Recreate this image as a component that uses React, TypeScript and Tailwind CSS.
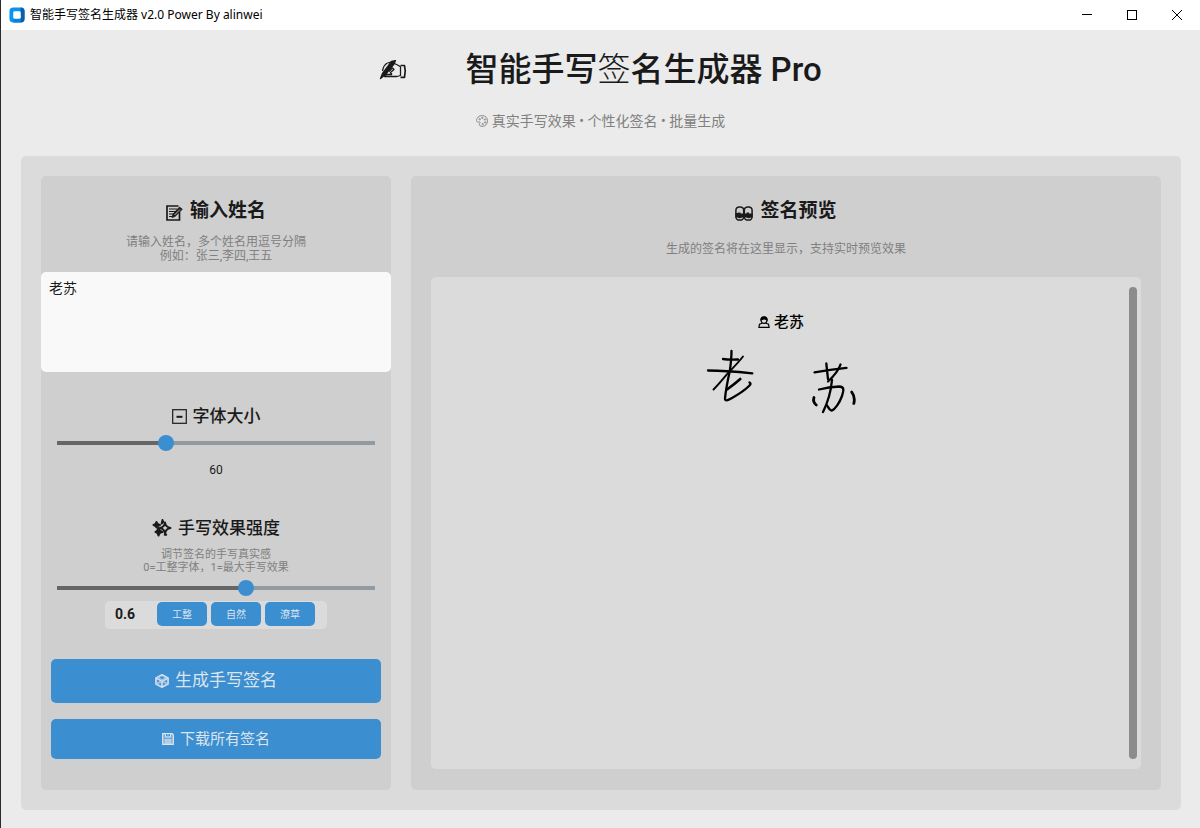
import { useState } from 'react'
import type { InputHTMLAttributes, ReactNode } from 'react'

const PRESETS = [
  { label: '工整', value: 0.2 },
  { label: '自然', value: 0.6 },
  { label: '潦草', value: 0.9 },
]

function WritingHandIcon() {
  return (
    <svg className="w-7 h-5 shrink-0" viewBox="0 0 28 20" fill="none" stroke="currentColor" strokeWidth="1.3" strokeLinejoin="round" aria-hidden="true">
      <path d="M1.500 18.500 3.500 13.500 12.500 1.500 16.500.6 15 4 6.500 14.500Z" fill="currentColor" />
      <path d="M8.500 3C5.500 4.500 4 7.500 3.500 11" />
      <path d="M12 2 8.500 3" />
      <path d="M15.500 3.500 19.500 5.500 21.500 6.800V15.500L18 16.500H5.500L7.500 14.500H13" />
      <path d="M10 11.500 13.500 8 15 9.500 11.500 12.500 13 14.500" />
      <path d="M21.500 5.500H25.500Q27 11 25.500 17.300H21.500" strokeWidth="1.700" />
    </svg>
  )
}

function PaletteIcon() {
  return (
    <svg className="size-3 shrink-0" viewBox="0 0 12 12" fill="none" stroke="currentColor" strokeWidth=".9" aria-hidden="true">
      <path d="M1 3.500C2 1.500 4 .6 6.300.6c3 0 5.200 2.200 5.200 5.200 0 3.200-2.200 5.600-5 5.600-2 0-3.300-.8-3.300-2 0-1 1.300-1.200 1-2C3.800 6.500 2.500 7.500 1.300 6.900.3 6.400.3 4.800 1 3.500Z" />
      <circle cx="3.700" cy="4.200" r=".7" />
      <circle cx="6.300" cy="2.900" r=".7" />
      <circle cx="9" cy="4.500" r=".7" />
      <circle cx="9.100" cy="7.400" r=".7" />
      <circle cx="6.700" cy="9.200" r=".7" />
    </svg>
  )
}

function MemoIcon() {
  return (
    <svg className="w-[17px] h-4 shrink-0" viewBox="0 0 17 16" fill="none" stroke="currentColor" aria-hidden="true">
      <path d="M12.500 1H1v14h12.500V7" strokeWidth="1.700" />
      <path d="M3 4h8M3 6.500h7M3 9h5M3 11.500h3.500" strokeWidth="1.100" />
      <path d="m6 12.500 1-3.500L13.500 2 16.300 4.300 9 11.500Z" fill="currentColor" strokeWidth=".8" />
      <path d="m8.500 10 5.500-5.500" stroke="#cfcfcf" strokeWidth=".9" />
    </svg>
  )
}

function SizeIcon() {
  return (
    <svg className="size-[15px] shrink-0" viewBox="0 0 15 15" fill="none" stroke="currentColor" strokeWidth="1.200" aria-hidden="true">
      <rect x=".7" y=".7" width="13.600" height="13.600" />
      <path d="M4.500 7.800h6" strokeWidth="2" />
    </svg>
  )
}

function SparklesIcon() {
  return (
    <svg className="w-5 h-[18px] shrink-0" viewBox="0 0 20 18" fill="none" stroke="currentColor" strokeWidth="2" strokeLinejoin="round" aria-hidden="true">
      <path d="M13 3.500Q13.500 8 18.500 9 13.500 10 13 14.500 12.500 10 8 9 12.500 8 13 3.500Z" />
      <path d="M6.500 8.500Q7 12 10.500 13 7 13.500 6.500 16.500 6 13.500 3.500 13 6 12 6.500 8.500Z" fill="currentColor" />
      <path d="M4.500 3Q5 5.500 8 6 5 6.500 4.500 8.500 4 6.500 1.500 6 4 5.500 4.500 3Z" fill="currentColor" />
      <path d="M10.500 1 11.300 3 9.700 4.500Z" fill="currentColor" />
      <path d="M13.500 14.500 14.500 16 12.500 16Z" fill="currentColor" strokeWidth="1.500" />
    </svg>
  )
}

function DiceIcon() {
  return (
    <svg className="size-3.5 shrink-0" viewBox="0 0 14 14" fill="none" stroke="currentColor" aria-hidden="true">
      <path d="M7 .6 13.200 3.800V10.200L7 13.400.8 10.200V3.800Z" fill="currentColor" fillOpacity=".6" strokeWidth="1.200" />
      <path d="M1 4 7 7.300 13 4M7 7.300V13" strokeWidth="1" />
      <g fill="#3b8ed0" stroke="none">
        <ellipse cx="7" cy="3.700" rx="2" ry="1.100" />
        <circle cx="3" cy="7" r="1" />
        <circle cx="5.200" cy="10.300" r="1" />
        <circle cx="8.900" cy="10" r="1" />
        <circle cx="11.200" cy="7.200" r="1" />
      </g>
    </svg>
  )
}

function FloppyIcon() {
  return (
    <svg className="size-3 shrink-0" viewBox="0 0 12 12" fill="none" stroke="currentColor" aria-hidden="true">
      <path d="M.7.7H10.200L11.300 2V11.300H.7Z" fill="currentColor" fillOpacity=".35" strokeWidth="1.300" />
      <path d="M3.500 1v3h5V1" strokeWidth="1" />
      <path d="M2.500 6h7v5h-7Z" fill="currentColor" fillOpacity=".6" stroke="none" />
      <path d="M4.500 1v2M7.500 1v2" stroke="#3b8ed0" strokeWidth="1" />
    </svg>
  )
}

function EyesIcon() {
  return (
    <svg className="w-[18px] h-[15px] shrink-0" viewBox="0 0 18 15" fill="none" stroke="currentColor" strokeWidth="1.500" aria-hidden="true">
      <rect x=".9" y=".9" width="7.800" height="13.200" rx="3.400" />
      <rect x="9.300" y=".9" width="7.800" height="13.200" rx="3.400" />
      <path d="M.5 7H3V6.500H5.500V7.500H11.500V6.500H14V7.500H17.500V11.500H16Q13.500 13 11.500 11.500H7Q4.500 13 2.500 11.500H.5Z" fill="currentColor" stroke="none" />
    </svg>
  )
}

function PersonIcon() {
  return (
    <svg className="size-3 shrink-0" viewBox="0 0 12 12" fill="none" stroke="currentColor" strokeWidth="1.200" aria-hidden="true">
      <path d="M3 3.800C3-.2 9-.2 9 3.800 9 8.600 3 8.600 3 3.800Z" />
      <path d="M3 4C3 .2 9 .2 9 4L6.500 2.800Z" fill="currentColor" />
      <path d="M4.200 7.300 1.500 8.200.9 11.300H11.100L10.500 8.200 7.800 7.300" />
    </svg>
  )
}

// pen strokes of the rendered signature
function SignatureDrawing() {
  return (
    <svg className="w-[152px] h-[66px]" viewBox="0 0 152 66" fill="none" stroke="#000" strokeWidth="2.300" strokeLinecap="round" strokeLinejoin="round" role="img" aria-label="手写签名">
      <path d="M26.500 2Q26.500 10 24.800 22C23 30 21 39 20 49.500 20 52.500 22.500 51.500 27 49 34 45 40 41 44 37 46 35 46 34.500 44.500 33.500" />
      <path d="M18 10Q24 11 33 10.500" />
      <path d="M3 21.500Q20 21.500 47.300 24.300" />
      <path d="M38 7.500C33 14 28 19 23 24 18 30 14 35 8.500 40.500" strokeWidth="1.900" />
      <path d="M35.300 30Q29 35.500 22 40.500" strokeWidth="2.600" />
      <path d="M109.500 23.300Q125 20.500 141.500 18.800" />
      <path d="M121.300 14.500 123 30" />
      <path d="M135.500 15.500C134 20 129 27 123 32.500" />
      <path d="M114 40.500Q124 38 134 37.500C140 37.500 138.500 42 137 47 134.500 54 130 60 127 61.500 124.500 61.500 123.500 58.500 122 56.500" />
      <path d="M127 31C126 42 123 53 118 63" />
      <path d="M109 48.500Q107.500 53 111.300 56" strokeWidth="2.800" />
      <path d="M146.700 43Q150.500 48 148.800 54.500" strokeWidth="2.800" />
    </svg>
  )
}

type SliderProps = InputHTMLAttributes<HTMLInputElement> & {
  value: number
  min: number
  max: number
}

function Slider({ value, min, max, ...props }: SliderProps) {
  const percent = ((value - min) / (max - min)) * 100
  return (
    <input
      type="range"
      value={value}
      min={min}
      max={max}
      className="block w-full h-4 appearance-none bg-transparent bg-[length:100%_4px] bg-center bg-no-repeat cursor-pointer [&::-webkit-slider-thumb]:appearance-none [&::-webkit-slider-thumb]:size-4 [&::-webkit-slider-thumb]:rounded-full [&::-webkit-slider-thumb]:bg-[#3b8ed0]"
      style={{ backgroundImage: `linear-gradient(to right, #666666 ${percent}%, #939ba2 ${percent}%)` }}
      {...props}
    />
  )
}

function SectionTitle({ icon, children }: { icon: ReactNode; children: ReactNode }) {
  return (
    <span className="flex items-center justify-center gap-x-[7px] text-[19px] leading-6 font-semibold">
      <span className="pt-1">{icon}</span>
      {children}
    </span>
  )
}

function TitleBar() {
  return (
    <div className="flex items-center justify-between h-[30px] shrink-0 bg-white text-black">
      <div className="flex items-center gap-x-[5px] pl-2">
        <svg className="size-4 shrink-0" viewBox="0 0 17 17" aria-hidden="true">
          <rect x=".5" y=".5" width="16" height="16" rx="4" fill="#0a94f2" />
          <path d="M12.500.5a4 4 0 0 1 4 4v8a4 4 0 0 1-4 4V12.500L12 5Z" fill="#0b5ea8" />
          <path d="m5 12.500 7.500 0v4h-8Z" fill="#0880dc" />
          <rect x="4.500" y="4.500" width="8" height="8" rx="1.500" fill="#fff" />
        </svg>
        <span className="text-xs font-['Noto_Sans','Noto_Sans_CJK_SC',sans-serif]">智能手写签名生成器 v2.0 Power By alinwei</span>
      </div>
      <div className="flex h-full">
        <button type="button" aria-label="最小化" className="flex items-center justify-center w-[46px]">
          <svg className="size-[10px]" viewBox="0 0 10 10" stroke="currentColor">
            <path d="M0 4.500h10" />
          </svg>
        </button>
        <button type="button" aria-label="最大化" className="flex items-center justify-center w-11">
          <svg className="size-[10px]" viewBox="0 0 10 10" fill="none" stroke="currentColor">
            <rect x=".5" y=".5" width="9" height="9" />
          </svg>
        </button>
        <button type="button" aria-label="关闭" className="flex items-center justify-center w-[46px]">
          <svg className="size-[10px]" viewBox="0 0 10 10" stroke="currentColor">
            <path d="m0 0 10 10M10 0 0 10" />
          </svg>
        </button>
      </div>
    </div>
  )
}

export default function App() {
  const [names, setNames] = useState('老苏')
  const [fontSize, setFontSize] = useState(60)
  const [strength, setStrength] = useState(0.6)

  return (
    <div className="min-h-screen flex flex-col border-l border-[#2b2b2b] bg-[#ebebeb] text-[#1a1a1a] font-[Roboto,'Noto_Sans_CJK_SC',sans-serif]">
      <TitleBar />

      <header className="flex flex-col items-center pt-5">
        <h1 className="flex items-center gap-x-[58px] text-[33px] leading-10 font-medium">
          <WritingHandIcon />
          <span>
            智能手写<span className="font-light">签</span>名生成器 Pro
          </span>
        </h1>
        <p className="mt-[21px] flex items-center gap-x-1 text-sm leading-5 text-[#808080]">
          <PaletteIcon />
          真实手写效果 • 个性化签名 • 批量生成
        </p>
      </header>

      <main className="flex-1 flex gap-x-5 ml-5 mr-[19px] mt-[25px] mb-[18px] p-5 rounded-[5px] bg-[#dbdbdb]">
        <section className="w-[350px] shrink-0 pt-[23px] rounded-[5px] bg-[#cfcfcf]">
          <label htmlFor="names" className="block">
            <SectionTitle icon={<MemoIcon />}>输入姓名</SectionTitle>
          </label>
          <p className="mt-3 text-center text-xs leading-[14px] text-[#808080]">
            请输入姓名，多个姓名用逗号分隔
            <br />
            例如：张三,李四,王五
          </p>
          <textarea
            id="names"
            value={names}
            onChange={(e) => setNames(e.target.value)}
            className="mt-[9px] block w-full h-[100px] px-2 py-1.5 resize-none rounded-[5px] bg-[#f9f9fa] text-sm leading-5 outline-hidden"
          />

          <label htmlFor="font-size" className="mt-8 flex items-center justify-center gap-x-1.5 text-[17px] leading-6 font-medium">
            <SizeIcon />
            字体大小
          </label>
          <div className="mt-[7px] px-4">
            <Slider id="font-size" min={20} max={140} value={fontSize} onChange={(e) => setFontSize(Number(e.target.value))} />
          </div>
          <output htmlFor="font-size" className="mt-[9px] block text-center text-xs leading-5">
            {fontSize}
          </output>

          <label htmlFor="strength" className="mt-9 flex items-center justify-center gap-x-1.5 text-[17px] leading-6 font-medium">
            <SparklesIcon />
            手写效果强度
          </label>
          <p className="mt-2 text-center text-[11px] leading-[13px] text-[#808080]">
            调节签名的手写真实感
            <br />
            0=工整字体，1=最大手写效果
          </p>
          <div className="mt-1.5 px-4">
            <Slider id="strength" min={0} max={1} step={0.1} value={strength} onChange={(e) => setStrength(Number(e.target.value))} />
          </div>
          <div className="mt-[5px] mx-auto flex items-start gap-x-1 w-fit h-7 pt-px pl-2.5 pr-3 rounded-[5px] bg-[#dbdbdb]">
            <output htmlFor="strength" className="w-[38px] text-sm leading-6 font-bold">
              {strength.toFixed(1)}
            </output>
            {PRESETS.map((preset) => (
              <button
                key={preset.label}
                type="button"
                onClick={() => setStrength(preset.value)}
                className="w-[50px] h-6 rounded-[5px] bg-[#3b8ed0] text-[10px] text-[#dce4ee] hover:bg-[#36719f]"
              >
                {preset.label}
              </button>
            ))}
          </div>

          <div className="mt-[30px] px-2.5 flex flex-col gap-y-4">
            <button type="button" className="flex items-center justify-center gap-x-1.5 h-11 rounded-[5px] bg-[#3b8ed0] text-[17px] text-[#dce4ee] hover:bg-[#36719f]">
              <DiceIcon />
              生成手写签名
            </button>
            <button type="button" className="flex items-center justify-center gap-x-1.5 h-10 rounded-[5px] bg-[#3b8ed0] text-[15px] text-[#dce4ee] hover:bg-[#36719f]">
              <FloppyIcon />
              下载所有签名
            </button>
          </div>
        </section>

        <section className="flex-1 flex flex-col px-5 pt-[23px] pb-[21px] rounded-[5px] bg-[#cfcfcf]">
          <h2>
            <SectionTitle icon={<EyesIcon />}>签名预览</SectionTitle>
          </h2>
          <p className="mt-[18px] text-center text-xs leading-4 text-[#808080]">
            生成的签名将在这里显示，支持实时预览效果
          </p>
          <div className="flex-1 mt-5 flex rounded-[5px] bg-[#dbdbdb]">
            <div className="flex-1 flex flex-col items-center pt-[35px] pl-0.5">
              <h3 className="flex items-center gap-x-1 text-[15px] leading-5 font-medium text-black">
                <PersonIcon />
                {names}
              </h3>
              <div className="mt-[17px]">
                <SignatureDrawing />
              </div>
            </div>
            <div className="w-2 my-2.5 mr-1 rounded-full bg-[#8c8c8c]"></div>
          </div>
        </section>
      </main>
    </div>
  )
}
